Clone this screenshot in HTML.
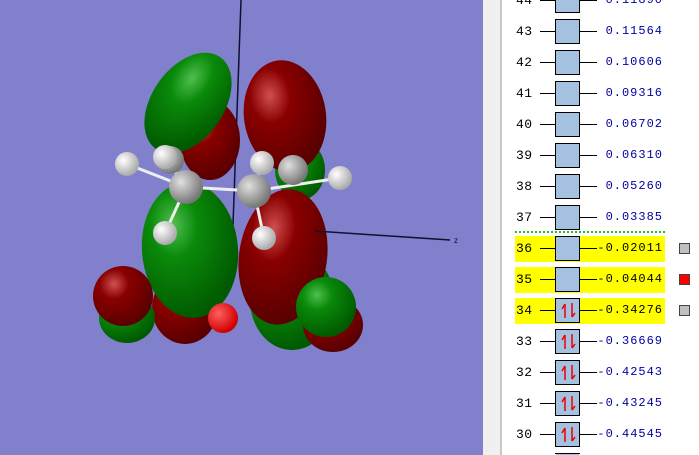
<!DOCTYPE html>
<html><head><meta charset="utf-8"><style>
html,body{margin:0;width:699px;height:455px;overflow:hidden}
#wrap{position:relative;width:699px;height:455px;overflow:hidden;background:#fff;font-family:"Liberation Mono",monospace}
#view{position:absolute;left:0;top:0;width:483px;height:455px;background:#8080cc}
#strip{position:absolute;left:483px;top:0;width:17px;height:455px;background:#f0f0f0}
#sep{position:absolute;left:500px;top:0;width:2px;height:455px;background:#c8c8c8}
.row{position:absolute;left:502px;width:197px;height:26px}
.hl{position:absolute;left:13px;top:0;width:150px;height:26px;background:#ffff00}
.num{position:absolute;left:14px;top:5px;font-size:13px;color:#000;letter-spacing:0.5px}
.ln{position:absolute;left:38px;top:12px;width:57px;height:1px;background:#000}
.box{position:absolute;left:53px;top:0;width:23px;height:23px;border:1px solid #000;background:#a4c2e0}
.val{position:absolute;right:36px;top:5px;font-size:12px;color:#0000a0;letter-spacing:1px;text-align:right}
.sq{position:absolute;left:177px;top:7px;width:9px;height:9px;border:1px solid #444;background:#c0c0c0}
.dot{position:absolute;left:515px;top:231px;width:150px;border-top:2px dotted #22bb22}
</style></head><body><div id="wrap">
<div id="view">
<svg width="483" height="455" viewBox="0 0 483 455">
<defs>
<radialGradient id="g" cx="35%" cy="30%" r="70%"><stop offset="0" stop-color="#4fbf4f"/><stop offset="0.35" stop-color="#0a8a0a"/><stop offset="1" stop-color="#005a00"/></radialGradient>
<radialGradient id="r" cx="35%" cy="30%" r="70%"><stop offset="0" stop-color="#d05050"/><stop offset="0.35" stop-color="#8a0000"/><stop offset="1" stop-color="#5a0000"/></radialGradient>
<radialGradient id="w" cx="35%" cy="35%" r="65%"><stop offset="0" stop-color="#fff"/><stop offset="1" stop-color="#aaa"/></radialGradient>
<radialGradient id="c" cx="35%" cy="35%" r="65%"><stop offset="0" stop-color="#e0e0e0"/><stop offset="1" stop-color="#777"/></radialGradient>
<radialGradient id="o" cx="35%" cy="35%" r="65%"><stop offset="0" stop-color="#ff6060"/><stop offset="1" stop-color="#d00000"/></radialGradient>
</defs>
<line x1="241" y1="0" x2="233" y2="225" stroke="#101030" stroke-width="1.5"/>
<ellipse cx="300" cy="170" rx="25" ry="30" fill="url(#g)"/>
<ellipse cx="210" cy="140" rx="30" ry="40" fill="url(#r)"/>
<ellipse cx="188" cy="103" rx="36" ry="56" transform="rotate(35 188 103)" fill="url(#g)"/>
<ellipse cx="285" cy="116" rx="41" ry="56" transform="rotate(-8 285 116)" fill="url(#r)"/>
<ellipse cx="185" cy="308" rx="33" ry="36" fill="url(#r)"/>
<ellipse cx="292" cy="300" rx="42" ry="50" fill="url(#g)"/>
<ellipse cx="190" cy="250" rx="48" ry="68" transform="rotate(-5 190 250)" fill="url(#g)"/>
<ellipse cx="283" cy="257" rx="44" ry="68" transform="rotate(8 283 257)" fill="url(#r)"/>
<ellipse cx="127" cy="318" rx="28" ry="25" fill="url(#g)"/>
<circle cx="123" cy="296" r="30" fill="url(#r)"/>
<ellipse cx="333" cy="325" rx="30" ry="27" fill="url(#r)"/>
<circle cx="326" cy="307" r="30" fill="url(#g)"/>
<circle cx="223" cy="318" r="15" fill="url(#o)"/>
<line x1="315" y1="231" x2="450" y2="240" stroke="#101030" stroke-width="1.5"/>
<text x="454" y="243" font-size="8" font-family="Liberation Sans,sans-serif" fill="#101030">z</text>
<g stroke="#eee" stroke-width="3">
<line x1="127" y1="164" x2="186" y2="187"/><line x1="165" y1="157" x2="186" y2="187"/><line x1="165" y1="233" x2="186" y2="187"/>
<line x1="186" y1="187" x2="254" y2="191"/><line x1="254" y1="191" x2="264" y2="238"/><line x1="254" y1="191" x2="340" y2="178"/><line x1="254" y1="191" x2="262" y2="163"/>
</g>
<circle cx="170" cy="160" r="14" fill="url(#c)"/><circle cx="293" cy="170" r="15" fill="url(#c)"/>
<circle cx="127" cy="164" r="12" fill="url(#w)"/><circle cx="165" cy="157" r="12" fill="url(#w)"/>
<circle cx="262" cy="163" r="12" fill="url(#w)"/><circle cx="340" cy="178" r="12" fill="url(#w)"/>
<circle cx="186" cy="187" r="17" fill="url(#c)"/><circle cx="254" cy="191" r="17" fill="url(#c)"/>
<circle cx="165" cy="233" r="12" fill="url(#w)"/><circle cx="264" cy="238" r="12" fill="url(#w)"/>
</svg>
</div>
<div id="strip"></div><div id="sep"></div>
<div class="dot"></div>

<div class="row" style="top:0;height:13px;overflow:hidden"><div style="position:absolute;left:0;top:-12px;width:197px;height:26px"><div class="num">44</div><div class="ln"></div><div class="box"></div><div class="val">0.11890</div></div></div>
<div class="row" style="top:19px"><div class="num">43</div><div class="ln"></div><div class="box"></div><div class="val">0.11564</div></div>
<div class="row" style="top:50px"><div class="num">42</div><div class="ln"></div><div class="box"></div><div class="val">0.10606</div></div>
<div class="row" style="top:81px"><div class="num">41</div><div class="ln"></div><div class="box"></div><div class="val">0.09316</div></div>
<div class="row" style="top:112px"><div class="num">40</div><div class="ln"></div><div class="box"></div><div class="val">0.06702</div></div>
<div class="row" style="top:143px"><div class="num">39</div><div class="ln"></div><div class="box"></div><div class="val">0.06310</div></div>
<div class="row" style="top:174px"><div class="num">38</div><div class="ln"></div><div class="box"></div><div class="val">0.05260</div></div>
<div class="row" style="top:205px"><div class="num">37</div><div class="ln"></div><div class="box"></div><div class="val">0.03385</div></div>
<div class="row" style="top:236px"><div class="hl"></div><div class="num">36</div><div class="ln"></div><div class="box"></div><div class="val" style="color:#000">-0.02011</div><div class="sq"></div></div>
<div class="row" style="top:267px"><div class="hl"></div><div class="num">35</div><div class="ln"></div><div class="box"></div><div class="val" style="color:#000">-0.04044</div><div class="sq" style="background:#f00"></div></div>
<div class="row" style="top:298px"><div class="hl"></div><div class="num">34</div><div class="ln"></div><div class="box"><svg width="23" height="23"><path d="M9 19V5M9 5L6 10M16 4v14M16 18l3-4" stroke="#e00" stroke-width="1.5" fill="none"/></svg></div><div class="val" style="color:#000">-0.34276</div><div class="sq"></div></div>
<div class="row" style="top:329px"><div class="num">33</div><div class="ln"></div><div class="box"><svg width="23" height="23"><path d="M9 19V5M9 5L6 10M16 4v14M16 18l3-4" stroke="#e00" stroke-width="1.5" fill="none"/></svg></div><div class="val">-0.36669</div></div>
<div class="row" style="top:360px"><div class="num">32</div><div class="ln"></div><div class="box"><svg width="23" height="23"><path d="M9 19V5M9 5L6 10M16 4v14M16 18l3-4" stroke="#e00" stroke-width="1.5" fill="none"/></svg></div><div class="val">-0.42543</div></div>
<div class="row" style="top:391px"><div class="num">31</div><div class="ln"></div><div class="box"><svg width="23" height="23"><path d="M9 19V5M9 5L6 10M16 4v14M16 18l3-4" stroke="#e00" stroke-width="1.5" fill="none"/></svg></div><div class="val">-0.43245</div></div>
<div class="row" style="top:422px;height:26px"><div class="num">30</div><div class="ln"></div><div class="box"><svg width="23" height="23"><path d="M9 19V5M9 5L6 10M16 4v14M16 18l3-4" stroke="#e00" stroke-width="1.5" fill="none"/></svg></div><div class="val">-0.44545</div></div>
<div style="position:absolute;left:555px;top:453px;width:25px;height:1px;background:#000"></div>
<div style="position:absolute;left:556px;top:454px;width:23px;height:1px;background:#a4c2e0"></div>
</div></body></html>
